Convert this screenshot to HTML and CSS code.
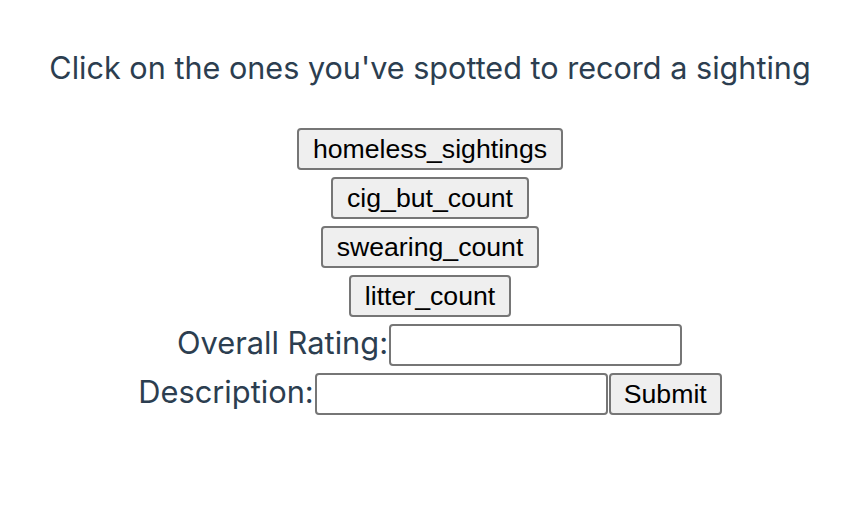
FILE: index.html
```html
<!DOCTYPE html>
<html>
<head>
<meta charset="utf-8">
<link rel="stylesheet" href="styles.css">
</head>
<body>
<div class="app">
  <p class="intro">Click on the ones you've spotted to record a sighting</p>
  <div class="counters">
    <button class="btn">homeless_sightings</button>
    <button class="btn">cig_but_count</button>
    <button class="btn">swearing_count</button>
    <button class="btn">litter_count</button>
  </div>
  <form class="form">
    <div class="row"><label class="label">Overall Rating:</label><input class="field" type="text"></div>
    <div class="row"><label class="label">Description:</label><input class="field" type="text"><button class="btn submit" type="button">Submit</button></div>
  </form>
</div>
</body>
</html>
```
FILE: styles.css
```css
html, body { margin: 0; padding: 0; background: #fff; }
.app {
  font-family: Inter, "Noto Sans", sans-serif;
  color: #2c3e50;
  text-align: center;
  padding-top: 48px;
  padding-right: 4px;
}
.intro {
  margin: 0;
  font-size: 30.6px;
  line-height: 40px;
}
.counters {
  display: flex;
  flex-direction: column;
  align-items: center;
  gap: 7px;
  margin-top: 40px;
}
.btn {
  font-family: "Liberation Sans", Arial, sans-serif;
  font-size: 26.67px;
  color: #000;
  background: #efefef;
  border: 2px solid #767676;
  border-radius: 4px;
  height: 42px;
  padding: 0 14px;
  box-sizing: border-box;
}
.form { margin-top: 7px; display: flex; flex-direction: column; align-items: center; gap: 7px; }
.row { display: flex; align-items: center; justify-content: center; }
.label { font-size: 30.8px; line-height: 38px; padding-bottom: 4px; }
.field {
  width: 293px;
  height: 42px;
  box-sizing: border-box;
  border: 2px solid #767676;
  border-radius: 4px;
  background: #fff;
  margin: 0 1px;
}
.submit { width: 113px; padding: 0; }
```
